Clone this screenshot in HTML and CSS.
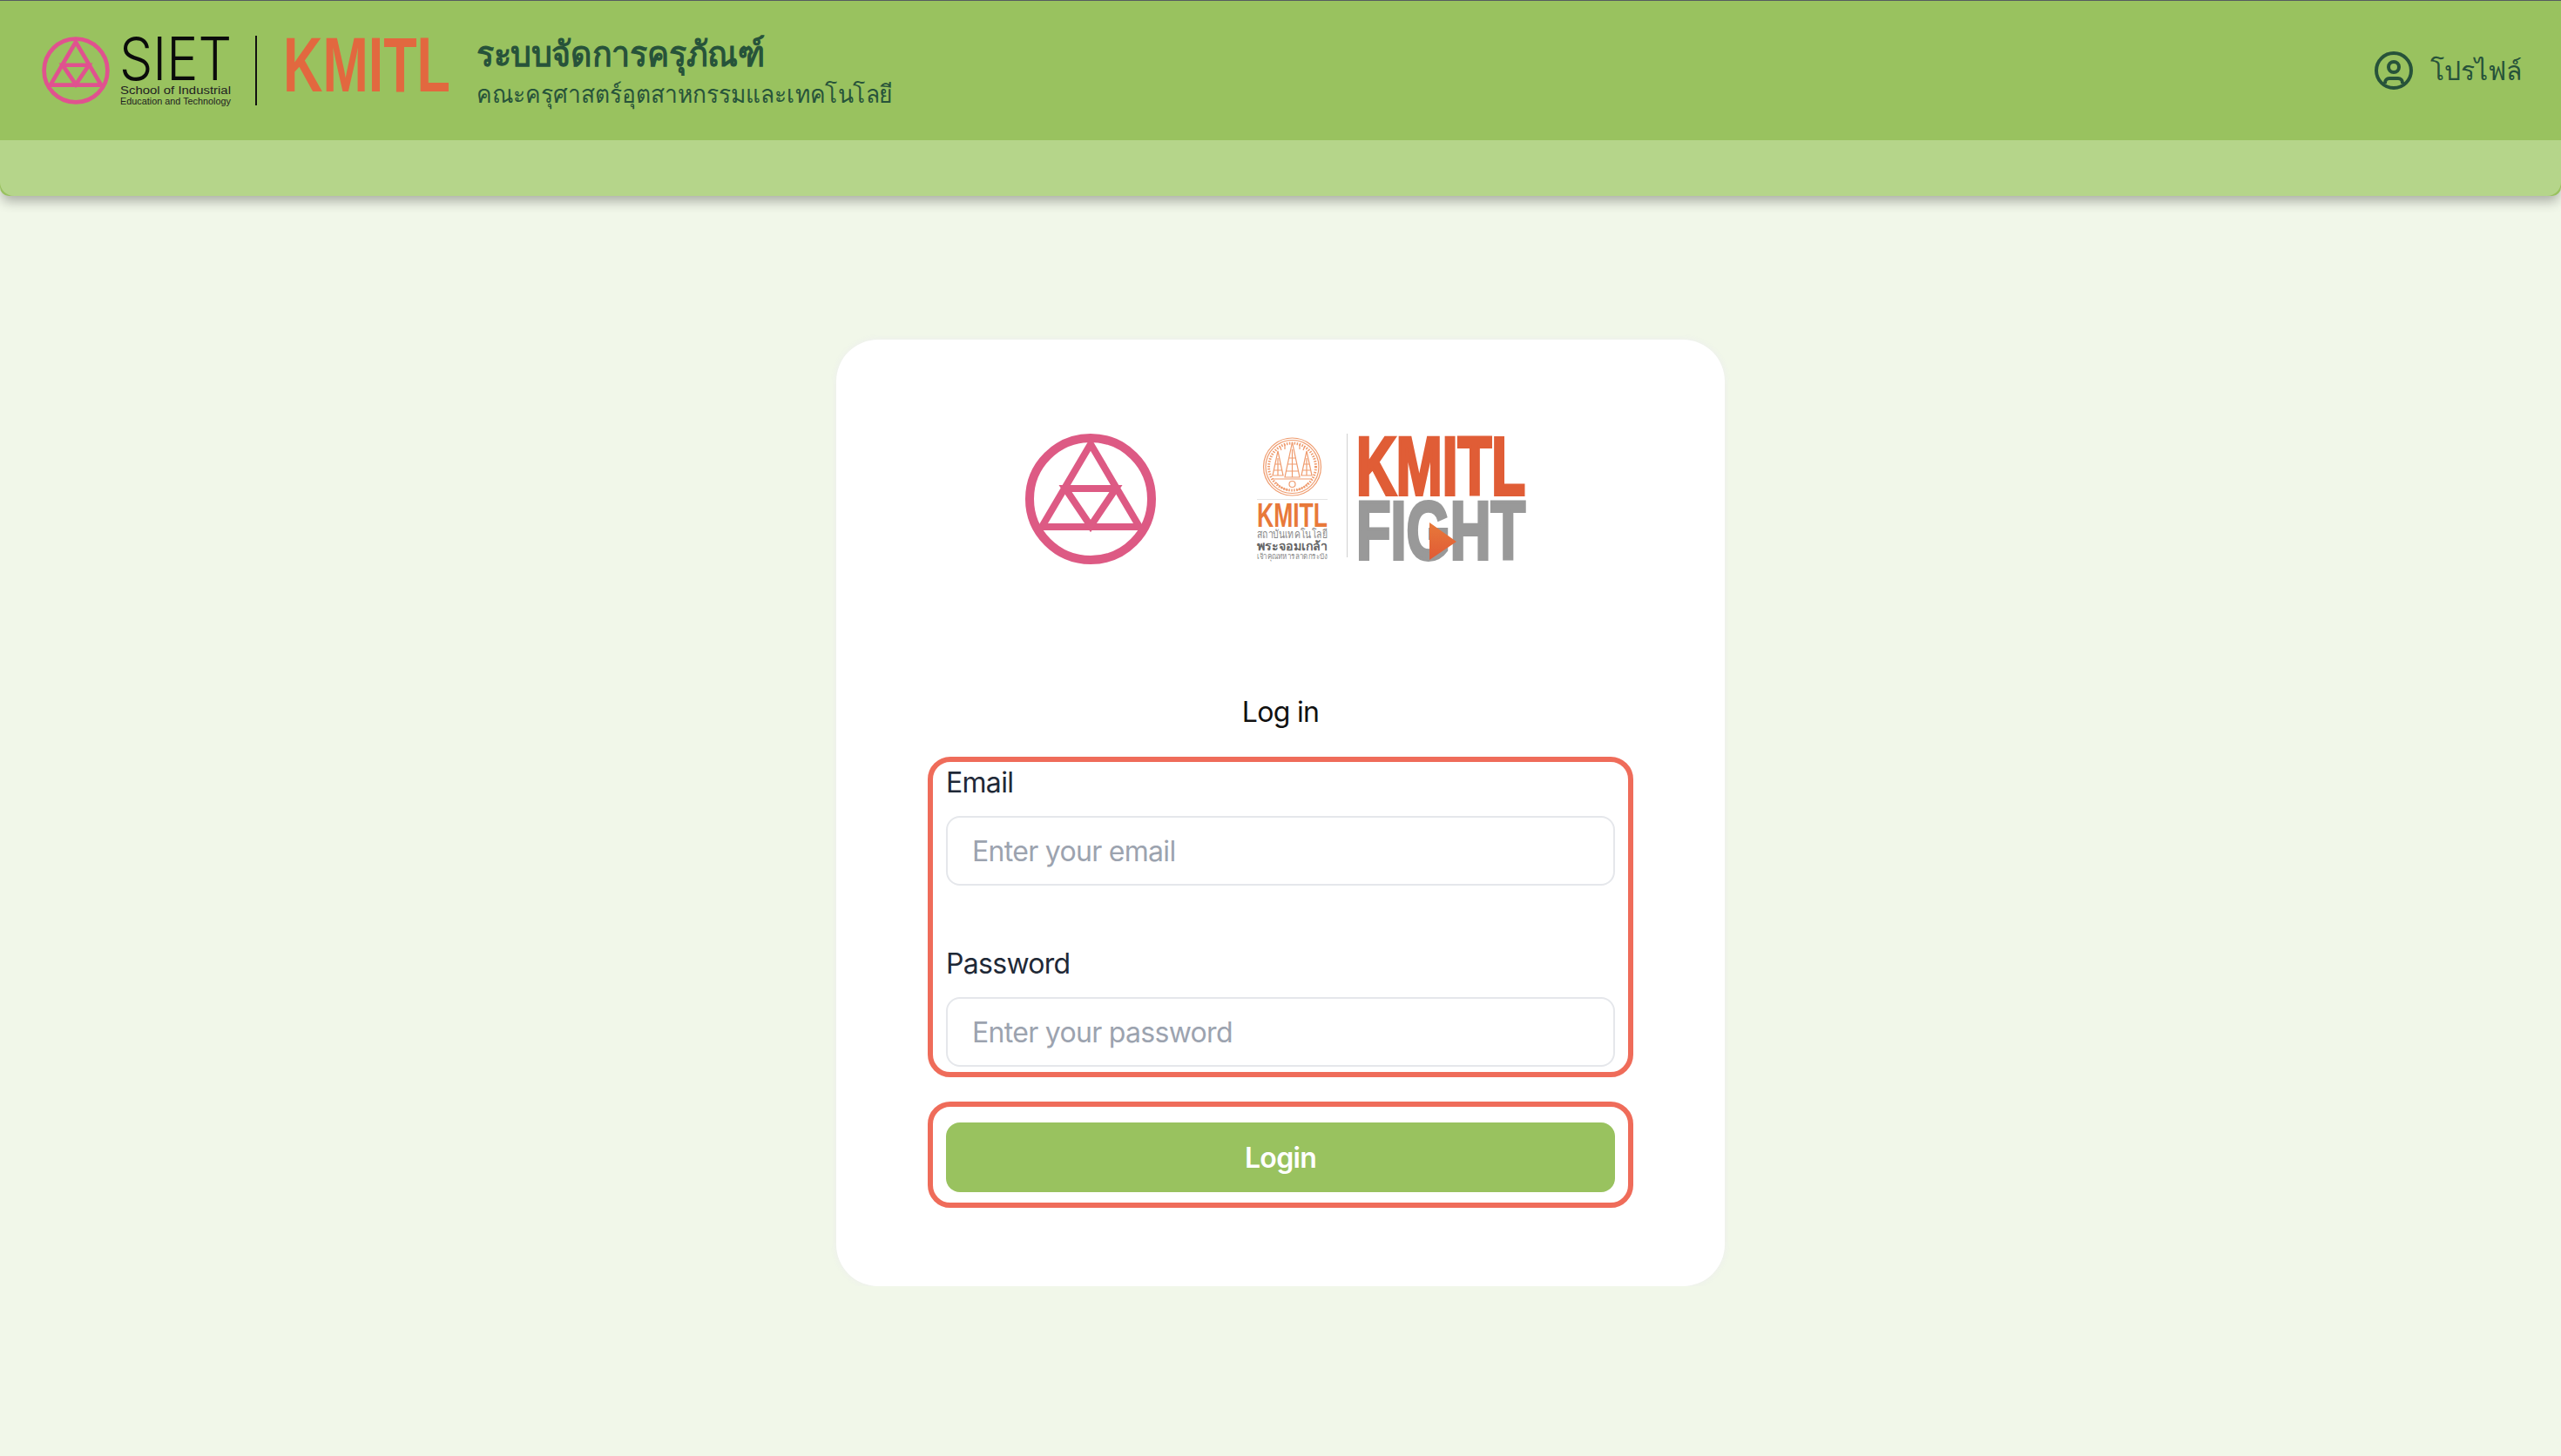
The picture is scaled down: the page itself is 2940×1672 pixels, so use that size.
FILE: index.html
```html
<!DOCTYPE html>
<html lang="th">
<head>
  <meta charset="UTF-8" />
  <meta name="viewport" content="width=device-width, initial-scale=1.0"/>
  <title>ระบบจัดการครุภัณฑ์</title>
  <link rel="stylesheet" href="styles.css">
</head>
<body>
  <header class="navbar">
    <div class="navbar-top">
      <svg class="brand-logo" viewBox="0 0 472 80" width="472" height="80">
        <g class="siet-mark" transform="translate(0 1) scale(.52)">
          <circle cx="75" cy="75" r="70"/>
          <path d="M75 12 L19 107 H131 Z"/>
          <path d="M46 63 H104 L75 106 Z"/>
        </g>
        <text class="siet-name" x="89" y="51" font-size="68" textLength="129" lengthAdjust="spacingAndGlyphs">SIET</text>
        <text class="siet-sub" x="90" y="67" font-size="12" textLength="127" lengthAdjust="spacingAndGlyphs">School of Industrial</text>
        <text class="siet-sub" x="90" y="79" font-size="10" textLength="127" lengthAdjust="spacingAndGlyphs">Education and Technology</text>
        <rect x="245" y="0" width="2" height="80" fill="#111"/>
        <text class="kmitl-name" x="277" y="64" font-size="89" textLength="192" lengthAdjust="spacingAndGlyphs">KMITL</text>
      </svg>
      <div class="brand-text">
        <div class="brand-title">ระบบจัดการครุภัณฑ์</div>
        <div class="brand-subtitle">คณะครุศาสตร์อุตสาหกรรมและเทคโนโลยี</div>
      </div>
      <a class="profile-link">
        <svg class="profile-icon" viewBox="0 0 44 44" width="44" height="44">
          <circle cx="22" cy="22" r="20"/>
          <circle cx="22" cy="18" r="6"/>
          <path d="M12 37 v-1 a5 5 0 0 1 5 -5 h10 a5 5 0 0 1 5 5 v1"/>
        </svg>
        <span>โปรไฟล์</span>
      </a>
    </div>
    <div class="navbar-bottom-wrap">
      <div class="navbar-bottom"></div>
    </div>
  </header>

  <main class="page">
    <div class="login-card">
      <div class="logo-row">
        <svg class="logo-siet" viewBox="0 0 150 150" width="150" height="150">
          <circle cx="75" cy="75" r="70"/>
          <path d="M75 12 L19 107 H131 Z"/>
          <path d="M46 63 H104 L75 106 Z"/>
        </svg>
        <svg class="logo-fight" viewBox="0 0 322 150" width="322" height="150">
          <defs>
            <linearGradient id="play-fill" x1="0" y1="0" x2="0" y2="1">
              <stop offset="0" stop-color="#e8793a"/>
              <stop offset="1" stop-color="#e05a35"/>
            </linearGradient>
          </defs>
          <g class="seal">
            <circle cx="42.5" cy="38" r="33"/>
            <circle cx="42.5" cy="38" r="30.5"/>
            <circle class="seal-dots" cx="42.5" cy="38" r="27"/>
            <path d="M42.5 10 L51 50 H34 Z M42.5 18 V50 M38 28 H47 M37 35 H48 M36 43 H49"/>
            <path d="M26 20 L32 48 H20 Z M59 20 L65 48 H53 Z M26 28 V48 M59 28 V48 M23 35 H29 M56 35 H62 M21 42 H31 M54 42 H64"/>
            <path d="M34 12 v6 M51 12 v6 M28 14 l2 5 M57 14 l-2 5"/>
            <path d="M20 52 H65 M24 56 c4 6 10 8 14 9 M61 56 c-4 6 -10 8 -14 9"/>
            <path d="M39 58 a3.5 3.5 0 1 1 7 0 a3.5 3.5 0 1 1 -7 0"/>
          </g>
          <rect x="2" y="75" width="81" height="1" fill="#e4e4e4"/>
          <text class="seal-name" x="2" y="107" font-size="38" textLength="81" lengthAdjust="spacingAndGlyphs">KMITL</text>
          <text class="seal-line" x="2" y="120" font-size="13" textLength="81" lengthAdjust="spacingAndGlyphs">สถาบันเทคโนโลยี</text>
          <text class="seal-line seal-bold" x="2" y="134" font-size="14" textLength="81" lengthAdjust="spacingAndGlyphs">พระจอมเกล้า</text>
          <text class="seal-line" x="2" y="144" font-size="9" textLength="81" lengthAdjust="spacingAndGlyphs">เจ้าคุณทหารลาดกระบัง</text>
          <rect x="105" y="0" width="1" height="142" fill="#d0d0d0"/>
          <text class="fight-top" x="116" y="70" font-size="94" textLength="194" lengthAdjust="spacingAndGlyphs">KMITL</text>
          <text class="fight-bottom" x="116" y="144" font-size="94" textLength="194" lengthAdjust="spacingAndGlyphs">FIGHT</text>
          <path d="M200 102 L231 124 L200 145 Z" fill="url(#play-fill)"/>
        </svg>
      </div>

      <div class="login-title">Log in</div>

      <form class="login-form" onsubmit="return false">
        <div class="outlined fields">
          <label for="email">Email</label>
          <input type="email" id="email" placeholder="Enter your email" />
          <label class="label-password" for="password">Password</label>
          <input type="password" id="password" placeholder="Enter your password" />
        </div>
        <div class="outlined actions">
          <button class="button" type="submit">Login</button>
        </div>
      </form>
    </div>
  </main>
</body>
</html>
```

FILE: styles.css
```css
* {
  box-sizing: border-box;
}
body {
  font-family: 'Inter', 'Noto Sans', sans-serif;
  background: #f1f7e9;
  margin: 0;
  padding: 0;
  color: #111;
}
svg {
  overflow: visible;
}
.navbar {
  background: #99c25f;
  border-top: 1px solid #555c60;
  box-shadow: 0 8px 14px -2px rgba(0, 0, 0, 0.3);
  position: relative;
  border-radius: 0 0 10px 10px;
}
.navbar-top {
  height: 160px;
  display: flex;
  align-items: center;
  padding: 0 45px 0 48px;
  color: #27533a;
}
.brand-logo {
  margin-right: 27px;
  flex: none;
}
.siet-mark circle, .siet-mark path {
  fill: none;
  stroke: #e0528f;
  stroke-width: 9;
}
.siet-name {
  font-family: 'Inter', sans-serif;
  font-weight: 300;
  fill: #0b0b0b;
}
.siet-sub {
  font-family: 'Liberation Sans', sans-serif;
  fill: #222;
}
.kmitl-name {
  font-family: 'Liberation Sans', sans-serif;
  font-weight: 700;
  fill: #e2683f;
}
.brand-text {
  transform: scaleX(.94);
  transform-origin: left center;
}
.brand-title {
  font-size: 40px;
  font-weight: 700;
  line-height: 54px;
}
.brand-subtitle {
  font-size: 28px;
  line-height: 38px;
}
.profile-link {
  margin-left: auto;
  display: flex;
  align-items: center;
  gap: 20px;
  font-size: 30px;
}
.profile-icon circle, .profile-icon path {
  fill: none;
  stroke: #27533a;
  stroke-width: 4;
}
.navbar-bottom {
  height: 64px;
  background: #b5d58a;
  border-radius: 0 0 16px 16px;
}
.page {
  display: flex;
  justify-content: center;
  padding-top: 165px;
}
.login-card {
  width: 1020px;
  height: 1087px;
  background: #fff;
  border-radius: 48px;
  padding: 108px 105px 90px;
  box-shadow: 0 0 6px rgba(236, 236, 240, 0.9);
}
.logo-row {
  display: flex;
  justify-content: center;
  gap: 114px;
  align-items: flex-start;
}
.logo-siet circle, .logo-siet path {
  fill: none;
  stroke: #dd5a84;
}
.logo-siet circle {
  stroke-width: 10;
}
.logo-siet path {
  stroke-width: 8;
}
.seal circle, .seal path {
  fill: none;
  stroke: #ef9c6f;
  stroke-width: 1.2;
}
.seal .seal-dots {
  stroke-width: 3;
  stroke-dasharray: 1.5 1.5;
}
.seal-name {
  font-family: 'Liberation Sans', sans-serif;
  font-weight: 700;
  fill: #e8793a;
}
.seal-line {
  font-family: 'Noto Sans', sans-serif;
  fill: #888;
}
.seal-bold {
  font-weight: 700;
  fill: #666;
}
.fight-top, .fight-bottom {
  font-family: 'Liberation Sans', sans-serif;
  font-weight: 700;
  stroke-width: 4;
}
.fight-top {
  fill: #e05d36;
  stroke: #e05d36;
}
.fight-bottom {
  fill: #999;
  stroke: #999;
}
.login-title {
  margin-top: 146px;
  text-align: center;
  font-size: 32px;
  line-height: 48px;
  letter-spacing: -0.7px;
  margin-bottom: 27px;
}
.login-form {
  display: flex;
  flex-direction: column;
  gap: 28px;
}
.outlined {
  border: 6px solid #ef6c5a;
  border-radius: 26px;
  padding: 0 15px;
}
.fields {
  height: 368px;
}
.fields label {
  display: block;
  font-size: 32px;
  line-height: 48px;
  letter-spacing: -0.7px;
  margin-bottom: 14px;
  color: #1f2937;
}
.fields .label-password {
  margin-top: 66px;
}
.fields input {
  display: block;
  width: 100%;
  height: 80px;
  padding: 0 28px;
  border: 2px solid #e5e7eb;
  border-radius: 16px;
  font-family: inherit;
  font-size: 32px;
  letter-spacing: -0.7px;
  background: #fff;
}
.fields input::placeholder {
  color: #9ca3af;
  opacity: 1;
}
.actions {
  padding: 18px 15px 12px;
}
.button {
  display: block;
  width: 100%;
  height: 80px;
  border: none;
  border-radius: 16px;
  background: #99c25f;
  color: #fff;
  font-family: inherit;
  font-size: 32px;
  font-weight: 600;
  letter-spacing: -0.7px;
  cursor: pointer;
}
```
